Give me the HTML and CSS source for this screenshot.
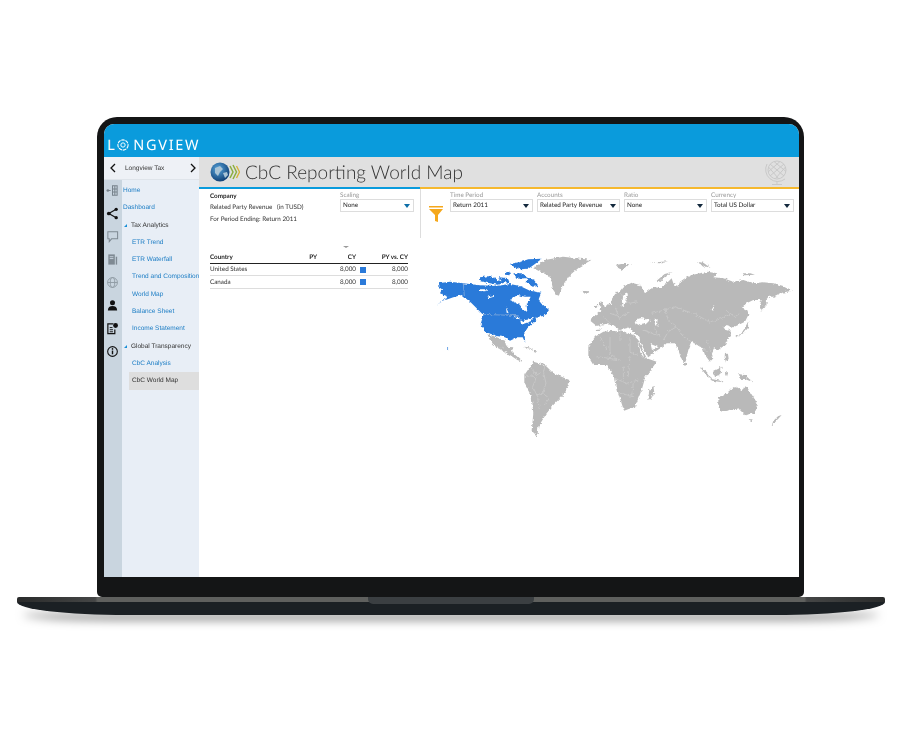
FILE: index.html
```html
<!DOCTYPE html>
<html lang="en">
<head>
  <meta charset="UTF-8">
  <title>CbC Reporting World Map</title>
  <link rel="stylesheet" href="styles.css">
</head>
<body>
  <div class="laptop">
    <div class="lid">
      <div class="screen">
        <header class="brand-bar">
          <div class="logo">
            <span>L</span>
            <svg class="logo-o" viewBox="0 0 20 20">
              <circle cx="10" cy="10" r="8.500" fill="none" stroke="#fff" stroke-width="1.800" stroke-dasharray="6 1.200"/>
              <circle cx="10" cy="10" r="3.600" fill="none" stroke="#fff" stroke-width="1.600"/>
            </svg>
            <span>NGVIEW</span>
          </div>
        </header>

        <div class="app">
          <nav class="side">
            <div class="side-head">
              <svg class="chev" viewBox="0 0 8 10"><path d="M6 1 2 5l4 4" fill="none" stroke="#111" stroke-width="1.300"/></svg>
              <span class="side-title">Longview Tax</span>
              <svg class="chev" viewBox="0 0 8 10"><path d="M2 1l4 4-4 4" fill="none" stroke="#111" stroke-width="1.300"/></svg>
            </div>
            <div class="side-body">
              <div class="rail">
                <svg class="rail-icon" viewBox="0 0 14 14"><path d="M1 7h4M7 2h5v10H7zM7 5.300h5M7 8.700h5M9.500 2v10" fill="none" stroke="#77838c" stroke-width="1.100"/><circle cx="2" cy="7" r="1.400" fill="#77838c"/></svg>
                <svg class="rail-icon" viewBox="0 0 14 14"><path d="M11 2.500 3 7l8 4.500" fill="none" stroke="#111" stroke-width="1.300"/><circle cx="3" cy="7" r="2" fill="#111"/><circle cx="11" cy="2.500" r="1.800" fill="#111"/><circle cx="11" cy="11.500" r="1.800" fill="#111"/></svg>
                <svg class="rail-icon" viewBox="0 0 14 14"><path d="M2 2h10.500v7.500H6l-2.500 3V9.500H2z" fill="none" stroke="#7f8a93" stroke-width="1.100"/></svg>
                <svg class="rail-icon" viewBox="0 0 14 14"><path d="M2.500 1.500h7v11h-7z" fill="#7f8a93"/><path d="M4 4h4M4 6h4" stroke="#c9d5df" stroke-width="1"/><path d="M10.500 4h1.500v8.500h-1.500z" fill="#7f8a93"/></svg>
                <svg class="rail-icon" viewBox="0 0 14 14"><g fill="none" stroke="#8f9aa3" stroke-width="1"><circle cx="7" cy="7" r="5.300"/><ellipse cx="7" cy="7" rx="2.400" ry="5.300"/><path d="M1.700 7h10.600"/></g></svg>
                <svg class="rail-icon" viewBox="0 0 14 14"><circle cx="7" cy="4" r="2.700" fill="#111"/><path d="M2 12.500c0-3.500 2-5 5-5s5 1.500 5 5z" fill="#111"/></svg>
                <svg class="rail-icon" viewBox="0 0 14 14"><path d="M8 2H2v10.500h7.500V8" fill="none" stroke="#111" stroke-width="1.300"/><path d="M4 6h3M4 8.300h3.500M4 10.500h3.500" stroke="#111" stroke-width="1"/><circle cx="10.300" cy="3.800" r="2.600" fill="#111"/></svg>
                <svg class="rail-icon" viewBox="0 0 14 14"><circle cx="7" cy="7" r="5.200" fill="none" stroke="#111" stroke-width="1.200"/><path d="M7 6v4" stroke="#111" stroke-width="1.500"/><circle cx="7" cy="4.200" r=".9" fill="#111"/></svg>
              </div>
              <ul class="menu">
                <li class="item">Home</li>
                <li class="item">Dashboard</li>
                <li class="group"><span class="tri"></span>Tax Analytics</li>
                <li class="item sub">ETR Trend</li>
                <li class="item sub">ETR Waterfall</li>
                <li class="item sub">Trend and Composition</li>
                <li class="item sub">World Map</li>
                <li class="item sub">Balance Sheet</li>
                <li class="item sub">Income Statement</li>
                <li class="group"><span class="tri"></span>Global Transparency</li>
                <li class="item sub">CbC Analysis</li>
                <li class="item sub current">CbC World Map</li>
              </ul>
            </div>
          </nav>

          <main class="content">
            <div class="title-bar">
              <svg class="title-logo" viewBox="0 0 30 22">
                <defs>
                  <radialGradient id="ball" cx=".4" cy=".35" r=".7">
                    <stop offset="0" stop-color="#5aa6dc"/>
                    <stop offset="1" stop-color="#0b3a70"/>
                  </radialGradient>
                </defs>
                <circle cx="10" cy="11" r="9.500" fill="url(#ball)"/>
                <path d="M5 7l5-2 3 3-3 3-2 4-3-3zM13 12l4-1 1 3-3 3z" fill="#a9c4d6"/>
                <path d="M20 5l3 6-3 6M23 4l3.500 7-3.500 7" fill="none" stroke="#8cae3e" stroke-width="1.500"/>
                <path d="M26.500 5l3 6-3 6" fill="none" stroke="#d6b23a" stroke-width="1.400"/>
              </svg>
              <h1 class="title">CbC Reporting World Map</h1>
              <svg class="title-globe" viewBox="0 0 28 28">
                <g fill="none" stroke="#c9c9c9" stroke-width="1">
                  <circle cx="14" cy="12" r="9"/>
                  <path d="M7 6l14 12M11 3.500l12 10M5.500 9l10 11.500M21 6L7 18M17 3.500L5 14M22.500 9l-10 11.500"/>
                  <path d="M4 6a12 12 0 0 0 18 15M14 23v3M9 26.500h10"/>
                </g>
              </svg>
            </div>
            <div class="rule"><span class="rule-blue"></span><span class="rule-gold"></span></div>

            <div class="filters">
              <div class="filters-left">
                <div class="company">
                  <div class="company-name">Company</div>
                  <div class="company-line">Related Party Revenue &nbsp; (in TUSD)</div>
                  <div class="company-line">For Period Ending: Return 2011</div>
                </div>
                <div class="field field-scaling">
                  <label class="field-label">Scaling</label>
                  <div class="select"><span>None</span><i class="caret caret-blue"></i></div>
                </div>
              </div>
              <div class="filters-right">
                <svg class="funnel" viewBox="0 0 14 16"><path d="M0 0h14v1.500H0zM0 3h14L9 9v7l-3-1V9z" fill="#f5a81c"/></svg>
                <div class="field">
                  <label class="field-label">Time Period</label>
                  <div class="select"><span>Return 2011</span><i class="caret"></i></div>
                </div>
                <div class="field">
                  <label class="field-label">Accounts</label>
                  <div class="select"><span>Related Party Revenue</span><i class="caret"></i></div>
                </div>
                <div class="field">
                  <label class="field-label">Ratio</label>
                  <div class="select"><span>None</span><i class="caret"></i></div>
                </div>
                <div class="field">
                  <label class="field-label">Currency</label>
                  <div class="select"><span>Total US Dollar</span><i class="caret"></i></div>
                </div>
              </div>
            </div>

            <div class="report">
              <div class="table-wrap">
                <i class="sort-mark"></i>
                <table class="grid">
                  <thead>
                    <tr><th class="c-name">Country</th><th class="c-py">PY</th><th class="c-cy">CY</th><th class="c-box"></th><th class="c-var">PY vs. CY</th></tr>
                  </thead>
                  <tbody>
                    <tr><td>United States</td><td></td><td class="num">8,000</td><td><i class="swatch"></i></td><td class="num">8,000</td></tr>
                    <tr><td>Canada</td><td></td><td class="num">8,000</td><td><i class="swatch"></i></td><td class="num">8,000</td></tr>
                  </tbody>
                </table>
              </div>

              <svg class="map" viewBox="430 250 370 195">
                <defs>
                  <filter id="rough" x="-5%" y="-5%" width="110%" height="110%">
                    <feTurbulence type="fractalNoise" baseFrequency=".11" numOctaves="3" seed="4"/>
                    <feDisplacementMap in="SourceGraphic" scale="11" xChannelSelector="R" yChannelSelector="G"/>
                  </filter>
                </defs>
                <g transform="translate(430 250) scale(.3333)" filter="url(#rough)">
                  <g class="land-us">
                    <path d="M25 100L60 95 100 100 150 106 200 108 240 102 270 108 300 122 334 128 326 148 340 165 357 180 345 197 325 200 312 215 292 235 283 250 286 278 278 262 262 262 240 272 225 262 200 258 165 245 152 222 160 195 125 160 95 135 70 142 40 152 20 165 55 140 30 130 36 118 25 110z"/>
                    <path d="M150 82l30-4 25 12 18 8-20 6-30-6-22-4zM205 82l28 2 6 14-22-2zM240 42l30-6 25-8 40-2-20 16-20 14-25 2-16-6zM250 70l28 0 14 14-30 2zM292 82l20 8 14 18-18 2-18-12zM225 65l14 3 0 8-14-2z"/>
                    <circle cx="52" cy="297" r="2.500"/>
                  </g>
                  <path class="hole" d="M240 150L262 135 285 140 302 140 290 165 292 186 275 175 262 160z"/>
                  <path class="hole" d="M150 118l22 0-6 6-16-1zM172 140l20-5 0 5-16 5zM228 172l8 18-6-2zM250 198l18 4 6 14 12-6 14-2 16-8-14 14-16 6-12 4-4-16-10-2z"/>
                  <path class="seam" d="M100 100l3 38M157 193l110 4"/>
                  <g class="land">
                    <path d="M310 55L345 30 400 20 484 30 450 50 420 75 395 115 385 142 370 120 362 80z"/>
                    <path d="M455 122l25 2-8 7-14-1z"/>
                    <path d="M172 252L200 262 225 272 229 290 250 292 245 305 262 320 277 335 262 330 240 315 205 295 190 285 180 265z"/>
                    <path d="M278 290l18 2 14 8-16-2zM312 302l10 2-2 4-9-2z"/>
                    <path d="M290 365L310 335 345 345 370 370 418 390 405 430 370 465 350 490 325 530 322 562 305 545 310 490 305 440 283 400 283 375z"/>
                    <path d="M505 165l8-12 10 14 2 12-16 2 6-10zM495 165l7 0-1 8-6-1z"/>
                    <path d="M497 226l24-4-2 12-12 7-9 0z"/>
                    <path d="M540 155l20-30 10 0-10 25-5 15-8-2z"/>
                  </g>
                  <path class="seam" d="M300 350l20 25 20-10 8 35-10 30-18 5M318 385l-10 25 15 30 5 40M338 430l20 15-15 20M285 375l30 5M345 345l-5 20M205 295l20-5"/>
                </g>
                <g transform="translate(610 250) scale(.3333)" filter="url(#rough)">
                  <g class="land">
                    <path d="M-62 210L-30 185 -18 172 5 160 20 135 40 110 65 98 90 105 105 130 130 110 150 115 170 100 185 85 190 100 205 110 210 95 225 85 245 75 270 70 295 65 322 70 310 82 340 85 370 95 400 90 430 100 460 97 490 100 520 108 549 122 530 125 510 130 490 140 475 140 462 160 452 185 450 165 455 150 430 150 410 160 395 172 412 180 415 195 405 215 385 225 370 232 350 225 340 235 358 240 365 250 355 265 345 285 325 300 312 295 305 310 310 325 300 335 285 315 280 300 270 290 262 285 245 275 235 300 225 340 215 330 205 300 195 280 170 280 158 290 135 305 115 322 95 285 85 260 70 245 60 232 30 240 10 225 -20 222 -40 228z"/>
                    <path d="M-65 290L-45 260 -20 245 30 240 70 255 85 270 110 325 140 335 105 385 95 420 75 470 42 482 25 430 15 385 -10 345 -50 345 -65 320z"/>
                    <path d="M130 408l3 20-12 22-7-6 4-24z"/>
                    <path d="M325 445L355 425 375 408 395 420 410 410 442 460 435 490 405 496 385 475 335 485 325 470z"/>
                    <path d="M515 495l-14 16-16 16 5-14 14-14zM416 508l12 0-5 8z"/>
                    <path d="M270 350l20 15 16 22-18-12zM310 362l25-12-4 25-16 3zM300 386l40 8-2 3-32-5zM345 368l10-2-4 14-5-4zM385 372l20 3 24 22-24-10-14 0zM345 308l9 4 2 14-8 12-4-16z"/>
                    <path d="M375 258l18-6 10-16 12-22-1 20-14 16-20 12zM455 182l4-20 12-18-2 24zM222 338l7 4-2 5-5-2z"/>
                    <path d="M18 45l16-3 30 0-14 5-12 14-12-6zM120 38l20-1 34-3-20 6zM260 36l20 2 22 16-20-6zM395 70l26 0 14 4-30 2zM140 92l24-20 24-6-22 12-14 18z"/>
                  </g>
                  <path class="hole" d="M80 208l14-4 26 6-12 12-20 4-14-8zM133 206l10 2-2 14 6 8-12-4zM305 180l8-14-3 16zM82 275l14 30 8 20-10-12zM122 282l24 10-20 8zM40 135l14-5-5 25-14 15z"/>
                  <path class="hole" d="M-60 232l30-6 34 3 30 14 12-1-30 2-30-6-32 2z"/>
                  <path class="seam" d="M125 190l40-10 30-10 30 12 30 10 45 25 35-12 25-12M165 180l10 30 25 20 20 30 40 25M200 230l-25 15-15 25M130 230l20 30M0 260l0 50 25 20M60 262l0 45 40 15M15 385l35 15 35-10M30 430l40 10M-40 320l70 10M30 130l30 30 20-5M0 190l30 10 30-15M345 180l30 20 15-10M-30 260l20 40M30 240l0 30M40 350l0 40M60 320l-5 60M70 400l-5 40M-20 200l20 20M15 170l15 40M265 285l25 20M290 270l15 40M100 240l40 15"/>
                </g>
              </svg>
            </div>
          </main>
        </div>
      </div>
      <div class="chin"></div>
    </div>
    <div class="base"><div class="notch"></div></div>
  </div>
</body>
</html>
```

FILE: styles.css
```css
* { box-sizing: border-box; }
html, body { margin: 0; padding: 0; }
body { width: 900px; height: 750px; background: #fff; overflow: hidden; font-family: Lato, "Noto Sans", sans-serif; color: #333; text-rendering: geometricPrecision; }

.laptop { padding-top: 117px; }
.lid {
  width: 707px;
  margin-left: 97px;
  padding: 7px 5px 0 7px;
  background: #141516;
  border-radius: 20px 20px 5px 5px;
}
.screen { background: #fff; height: 453px; display: flex; flex-direction: column; border-radius: 10px 10px 0 0; overflow: hidden; filter: blur(.3px); }
.chin { height: 20px; }

.base {
  width: 868px;
  height: 18px;
  margin-left: 17px;
  background:
    linear-gradient(to right, #2a2b2b 0, #454646 9%, #5f605e 9.300%, #5f605e 90.700%, #454646 91%, #2a2b2b 100%) 0 0 / 100% 5px no-repeat,
    #1b2024;
  border-radius: 2px 2px 110px 110px / 2px 2px 13px 13px;
  box-shadow: 0 11px 10px -6px rgba(0, 0, 0, .5);
}
.notch { width: 166px; height: 7px; margin: 0 auto; background: #3b3f42; border-radius: 0 0 5px 5px; }

.brand-bar { height: 33px; flex: none; background: #0a9bdc; display: flex; align-items: flex-end; }
.logo { display: flex; align-items: center; height: 18px; margin: 0 0 3px 3px; color: #fff; font-family: "Noto Sans", sans-serif; font-size: 14.500px; font-weight: 400; line-height: 1; letter-spacing: 1.700px; }
.logo-o { width: 12px; height: 12px; margin: 0 4px 0 1px; }

.app { flex: 1; display: flex; min-height: 0; }

.side { width: 95px; flex: none; display: flex; flex-direction: column; font-family: "Liberation Sans", sans-serif; font-size: 6.500px; }
.side-head { height: 23px; flex: none; display: flex; align-items: center; background: #eef1f6; border-bottom: 1px solid #dfe4ea; padding: 0 2.500px 0 5px; }
.chev { width: 8px; height: 10px; }
.side-title { flex: 1; padding-left: 8px; color: #333; }
.side-body { flex: 1; display: flex; min-height: 0; }
.rail { width: 18px; flex: none; background: #c9d5df; display: flex; flex-direction: column; align-items: center; gap: 10px; padding: 4px 2px 0 0; }
.rail-icon { width: 13px; height: 13px; flex: none; }
.menu { list-style: none; margin: 0; padding: 2px 0 0; flex: 1; min-width: 0; background: #e8eef6; }
.menu li { height: 17.300px; line-height: 17.300px; white-space: nowrap; }
.item { color: #1a7cc4; padding-left: 1px; }
.item.sub { padding-left: 10px; }
.item.current { margin-left: 7px; padding-left: 3px; background: #dedede; color: #333; }
.group { color: #333; padding-left: 2px; display: flex; align-items: center; }
.tri { width: 0; height: 0; margin-right: 4px; border-left: 3px solid transparent; border-bottom: 3px solid #1a8fd6; }

.content { flex: 1; min-width: 0; display: flex; flex-direction: column; }
.title-bar { height: 30px; flex: none; background: #e0e0e0; display: flex; align-items: center; padding: 0 8px 0 11px; }
.title-logo { width: 30px; height: 22px; flex: none; }
.title { flex: 1; margin: 0 0 0 5px; font-size: 19px; font-weight: 300; color: #333; white-space: nowrap; }
.title-globe { width: 28px; height: 28px; flex: none; }
.rule { height: 2px; flex: none; display: flex; }
.rule-blue { width: 221px; background: #0a9bdc; }
.rule-gold { flex: 1; background: #f5b82e; }

.filters { height: 49px; flex: none; display: flex; font-size: 6.300px; }
.filters-left { width: 222px; flex: none; display: flex; border-right: 1px solid #ddd; padding-left: 11px; }
.company { width: 130px; flex: none; padding-top: 2px; color: #333; }
.company-name { font-weight: 700; height: 11px; line-height: 11px; color: #222; }
.company-line { height: 12px; line-height: 12px; white-space: nowrap; }
.filters-right { flex: 1; display: flex; padding-left: 8px; gap: 4px; }
.funnel { width: 14px; height: 16px; flex: none; margin: 17px 3px 0 0; }
.field { width: 83px; flex: none; padding-top: 3px; }
.field-scaling { width: 74px; }
.field-label { display: block; height: 7px; line-height: 7px; color: #999; }
.select { height: 13px; display: flex; align-items: center; justify-content: space-between; padding: 0 3px 0 2px; border: 1px solid #ddd; background: #fff; color: #222; white-space: nowrap; }
.caret { width: 0; height: 0; border-left: 3.500px solid transparent; border-right: 3.500px solid transparent; border-top: 4px solid #13293d; }
.caret-blue { border-top-color: #0d6ea8; }

.report { flex: 1; display: flex; min-height: 0; }
.table-wrap { width: 209px; flex: none; margin-left: 11px; padding-top: 13px; position: relative; }
.sort-mark { position: absolute; left: 133px; top: 8px; width: 0; height: 0; border-left: 3.500px solid transparent; border-right: 3.500px solid transparent; border-top: 2.500px solid #999; }
.grid { width: 198px; border-collapse: collapse; table-layout: fixed; font-size: 6.300px; }
.grid th { height: 12px; padding: 1px 0 0; font-weight: 700; color: #222; text-align: right; border-bottom: 1px solid #222; }
.grid td { height: 12.500px; padding: 1px 0 0; border-bottom: 1px solid #ddd; color: #333; }
.grid th.c-name { width: 70px; text-align: left; }
.c-py { width: 37px; }
.c-cy { width: 39px; }
.c-box { width: 12px; }
.grid td.num { text-align: right; }
.swatch { display: block; width: 6px; height: 6px; margin-left: 4px; background: #2b7ad9; }

.map { flex: none; width: 370px; height: 195px; margin: 12px 0 0 11px; }
.land { fill: #b9b9b9; }
.land-us { fill: #2b7ad9; }
.hole { fill: #fff; }
.seam { fill: none; stroke: #dcdcdc; stroke-width: 1.200; }
```
